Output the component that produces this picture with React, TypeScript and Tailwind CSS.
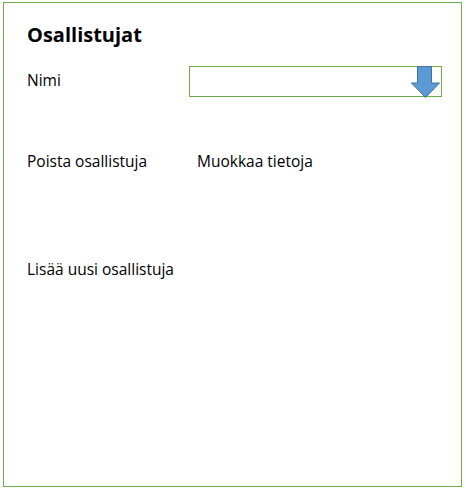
export default function App() {
  return (
    <div className="w-[466px] h-[492px] bg-white pt-[2px] pl-[3px]" style={{ fontFamily: '"Open Sans", Lato, sans-serif' }}>
      <div className="w-[459px] h-[485px] border border-[#70AD47] pl-[23px] pt-[20px] text-black">
        <div className="text-[20px] leading-[23px] font-bold">Osallistujat</div>
        <div className="mt-[20px] flex items-start">
          <div className="w-[162px] text-[15.5px] leading-[20px] mt-[4px]">Nimi</div>
          <div className="relative w-[253px] h-[31px] border border-[#70AD47] bg-white">
            <svg className="absolute left-[221px] top-[-1px]" width="29" height="32" viewBox="0 0 29 32">
              <path
                d="M6.5 0.5 H20.5 V17 H28.5 L14.5 31.5 L0.5 17 H6.5 Z"
                fill="#5B9BD5"
                stroke="#41719C"
                strokeWidth="1"
                strokeLinejoin="miter"
              />
            </svg>
          </div>
        </div>
        <div className="mt-[54px] flex text-[15.5px] leading-[20px]">
          <div className="w-[170px]">Poista osallistuja</div>
          <div>Muokkaa tietoja</div>
        </div>
        <div className="mt-[88px] text-[15.5px] leading-[20px]">Lisää uusi osallistuja</div>
      </div>
    </div>
  );
}
